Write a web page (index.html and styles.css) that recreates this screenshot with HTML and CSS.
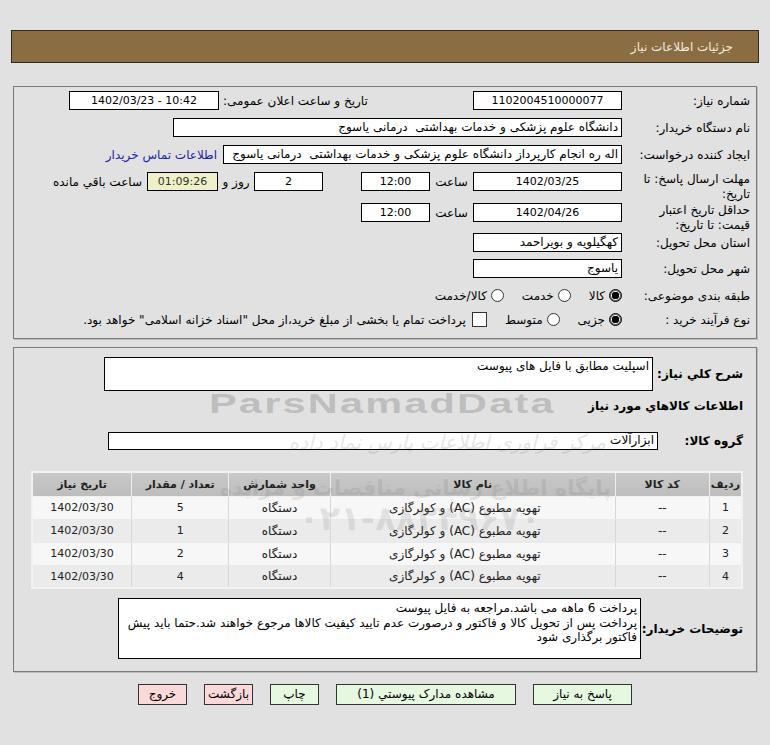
FILE: index.html
```html
<!DOCTYPE html>
<html lang="fa" dir="rtl">
<head>
<meta charset="utf-8">
<title>جزئیات اطلاعات نیاز</title>
<link rel="stylesheet" href="styles.css">
</head>
<body>
<div class="page">
  <div class="header">جزئیات اطلاعات نیاز</div>

  <div class="panel p1">
    <div class="row r1">
      <div class="lbl">شماره نیاز:</div>
      <div class="box w149 c">1102004510000077</div>
      <div class="lbl2 ann">تاریخ و ساعت اعلان عمومی:</div>
      <div class="box w150 c">1402/03/23 - 10:42</div>
    </div>
    <div class="row">
      <div class="lbl">نام دستگاه خریدار:</div>
      <div class="box w449">دانشگاه علوم پزشکی و خدمات بهداشتی&nbsp; درمانی یاسوج</div>
    </div>
    <div class="row">
      <div class="lbl">ایجاد کننده درخواست:</div>
      <div class="box w399">اله ره انجام کارپرداز دانشگاه علوم پزشکی و خدمات بهداشتی&nbsp; درمانی یاسوج</div>
      <a class="link">اطلاعات تماس خریدار</a>
    </div>
    <div class="row r4">
      <div class="lbl two">مهلت ارسال پاسخ: تا تاریخ:</div>
      <div class="box w149 c">1402/03/25</div>
      <div class="lbl2 saat">ساعت</div>
      <div class="box w69 c">12:00</div>
      <div class="box w69 c days">2</div>
      <div class="lbl2 ruz">روز و</div>
      <div class="box w71 c count">01:09:26</div>
      <div class="lbl2 rem">ساعت باقي مانده</div>
    </div>
    <div class="row r5">
      <div class="lbl two">حداقل تاریخ اعتبار قیمت: تا تاریخ:</div>
      <div class="box w149 c">1402/04/26</div>
      <div class="lbl2 saat">ساعت</div>
      <div class="box w69 c">12:00</div>
    </div>
    <div class="row r6">
      <div class="lbl">استان محل تحویل:</div>
      <div class="box w149">کهگیلویه و بویراحمد</div>
    </div>
    <div class="row">
      <div class="lbl">شهر محل تحویل:</div>
      <div class="box w149">یاسوج</div>
    </div>
    <div class="row opts">
      <div class="lbl">طبقه بندی موضوعی:</div>
      <span class="radio on"></span><span class="opt">کالا</span>
      <span class="radio"></span><span class="opt">خدمت</span>
      <span class="radio"></span><span class="opt">کالا/خدمت</span>
    </div>
    <div class="row opts">
      <div class="lbl">نوع فرآیند خرید :</div>
      <span class="radio on"></span><span class="opt">جزیی</span>
      <span class="radio"></span><span class="opt">متوسط</span>
      <span class="check"></span><span class="opt">پرداخت تمام یا بخشی از مبلغ خرید،از محل "اسناد خزانه اسلامی" خواهد بود.</span>
    </div>
  </div>

  <div class="panel p2">
    <div class="row2 desc">
      <div class="blbl">شرح کلي نياز:</div>
      <div class="box big">اسپلیت مطابق با فایل های پیوست</div>
    </div>
    <div class="sect">اطلاعات کالاهاي مورد نياز</div>
    <div class="row2 grp">
      <div class="blbl">گروه کالا:</div>
      <div class="box gbox">ابزارآلات</div>
    </div>
    <table class="items">
      <thead>
        <tr><th class="c1">ردیف</th><th class="c2">کد کالا</th><th class="c3">نام کالا</th><th class="c4">واحد شمارش</th><th class="c5">تعداد / مقدار</th><th class="c6">تاریخ نیاز</th></tr>
      </thead>
      <tbody>
        <tr><td>1</td><td>--</td><td>تهویه مطبوع (AC) و کولرگازی</td><td>دستگاه</td><td>5</td><td>1402/03/30</td></tr>
        <tr><td>2</td><td>--</td><td>تهویه مطبوع (AC) و کولرگازی</td><td>دستگاه</td><td>1</td><td>1402/03/30</td></tr>
        <tr><td>3</td><td>--</td><td>تهویه مطبوع (AC) و کولرگازی</td><td>دستگاه</td><td>2</td><td>1402/03/30</td></tr>
        <tr><td>4</td><td>--</td><td>تهویه مطبوع (AC) و کولرگازی</td><td>دستگاه</td><td>4</td><td>1402/03/30</td></tr>
      </tbody>
    </table>
    <div class="row2 notes">
      <div class="blbl">توضیحات خریدار:</div>
      <div class="box nbox">پرداخت 6 ماهه می باشد.مراجعه به فایل پیوست<br>پرداخت پس از تحویل کالا و فاکتور و درصورت عدم تایید کیفیت کالاها مرجوع خواهند شد.حتما باید پیش فاکتور برگذاری شود</div>
    </div>
    <div class="wm wm-en">ParsNamadData</div>
    <div class="wm wm-fa1">مرکز فراوری اطلاعات پارس نماد داده</div>
    <div class="wm wm-fa2">پایگاه اطلاع رسانی مناقصات و مزایده</div>
    <div class="wm wm-num">۰۲۱-۸۸۳۴۹۶۷۰</div>
  </div>

  <div class="buttons">
    <span class="btn g b1">پاسخ به نیاز</span>
    <span class="btn g b2">مشاهده مدارک پیوستي (1)</span>
    <span class="btn g b3">چاپ</span>
    <span class="btn r b4">بازگشت</span>
    <span class="btn r b5">خروج</span>
  </div>
</div>
</body>
</html>
```
FILE: styles.css
```css
* { box-sizing: border-box; }
body {
  margin: 0;
  background: #e1e1e1;
  font-family: "DejaVu Sans", Tahoma, sans-serif;
  font-size: 12px;
  color: #000;
}
.page { padding: 30px 11px 0 11px; position: relative; }
.header {
  height: 33px;
  background: #8b6d43;
  border: 1px solid #2e2a22;
  color: #f2ebdd;
  font-size: 12px;
  padding-right: 25px;
  line-height: 32px;
}
.panel {
  margin: 23px 2px 0 2px;
  border: 1px solid #7a7a7a;
  box-shadow: 1px 1px 0 #bdbdbd;
  position: relative;
}
.p1 { height: 253px; padding: 4px 6px 0 0; }
.row { display: flex; align-items: center; height: 19px; margin-bottom: 8px; }
.lbl { width: 128px; flex: none; white-space: nowrap; }
.lbl.two { white-space: normal; line-height: 15px; padding-left: 14px; }
.box {
  background: #fff;
  border: 1px solid #000;
  height: 19px;
  line-height: 17px;
  padding: 0 3px;
  white-space: nowrap;
  overflow: hidden;
  flex: none;
}
.c { text-align: center; direction: ltr; font-size: 11px; padding: 0; }
.w149 { width: 149px; }
.w150 { width: 150px; }
.w449 { width: 449px; }
.w399 { width: 399px; }
.w69 { width: 69px; }
.w71 { width: 71px; }
.ann { width: 159px; padding-right: 95px; box-sizing: content-box; white-space: nowrap; text-align: left; padding-left: 4px; width: 155px; }
.link { color: #1a23a8; margin-right: 6px; white-space: nowrap; }
.r4 .lbl, .r5 .lbl { align-self: flex-start; }
.r4 { margin-bottom: 12px; }
.saat { width: 43px; text-align: center; flex: none; }
.days { margin-right: 38px; }
.ruz { width: 36px; text-align: center; flex: none; white-space: nowrap; }
.count { background: #efefc8; color: #333; }
.rem { margin-right: 5px; white-space: nowrap; }
.r5 { margin-bottom: 11px; }
.r6 { margin-bottom: 7px; }
.opts { margin-bottom: 5px; }
.radio {
  width: 13px; height: 13px; border-radius: 50%;
  border: 1px solid #333; background: #fff; flex: none;
  margin-left: 4px;
}
.radio.on { background: radial-gradient(circle, #000 0 3.5px, #fff 4px); border-color: #000; box-shadow: inset 0 0 0 1px #555; }
.opt { margin-left: 18px; white-space: nowrap; }
.check { width: 15px; height: 15px; border: 1px solid #333; background: #fff; flex: none; margin-left: 6px; }

.p2 { margin-top: 8px; height: 325px; padding: 9px 13px 0 14px; }
.row2 { display: flex; }
.blbl { font-weight: bold; font-size: 12px; white-space: nowrap; flex: none; }
.desc .blbl { width: 90px; padding-top: 10px; }
.big { width: 549px; height: 34px; line-height: 15px; padding-top: 1px; }
.sect { font-weight: bold; font-size: 12px; margin-top: 8px; height: 20px; }
.grp { margin-top: 13px; align-items: center; }
.grp .blbl { width: 85px; }
.gbox { width: 550px; height: 18px; line-height: 15px; }
.items {
  margin-top: 21px;
  width: 712px;
  border-collapse: collapse;
  border: 2px solid #f2f2f2;
  font-size: 12px;
}
.items th {
  background: linear-gradient(#c9c9c9, #bdbdbd);
  height: 24px;
  font-weight: bold;
  font-size: 11px;
  color: #222;
  border: 1px solid #efefef;
}
.items td {
  height: 23px;
  text-align: center;
  border: 1px solid #e9e9e9;
  border-left-color: #d7d7d7;
  color: #222;
}
.items td:nth-child(1), .items td:nth-child(5), .items td:nth-child(6) { font-size: 11px; }
.items td:nth-child(3) { text-align: right; padding-right: 74px; }
.items tbody tr:nth-child(odd) td { background: #f7f7f7; }
.items tbody tr:nth-child(even) td { background: #ebebeb; }
.c1 { width: 30px; }
.c2 { width: 95px; }
.c3 { width: 287px; }
.c4 { width: 102px; }
.c5 { width: 98px; }
.c6 { width: 100px; }
.notes { margin-top: 9px; align-items: center; }
.notes .blbl { width: 102px; }
.nbox { width: 523px; height: 61px; white-space: normal; line-height: 14.5px; padding: 2px 3px; }

.buttons { display: flex; margin-top: 12px; padding-right: 127px; }
.btn {
  height: 21px; line-height: 19px;
  border: 1px solid #333;
  text-align: center;
  font-size: 12px;
  margin-left: 17px;
  flex: none;
}
.g { background: #e7f8e1; }
.r { background: #fbd9d9; }
.b1 { width: 99px; }
.b2 { width: 180px; }
.b3 { width: 49px; }
.b4 { width: 49px; }
.b5 { width: 49px; }

.wm { position: absolute; pointer-events: none; white-space: nowrap; }
.wm-en {
  left: 195px; top: 40px;
  font-family: "Liberation Sans", Arial, sans-serif;
  font-weight: bold;
  font-size: 28px;
  letter-spacing: 1.5px;
  color: rgba(140,140,140,0.42);
  direction: ltr;
  transform: scaleX(1.48);
  transform-origin: left top;
}
.wm-fa1 {
  right: 150px; top: 82px;
  font-size: 20px;
  font-style: italic;
  color: rgba(120,120,120,0.2);
}
.wm-fa2 {
  right: 145px; top: 128px;
  font-size: 21px;
  font-weight: bold;
  color: rgba(110,110,110,0.18);
}
.wm-num {
  right: 215px; top: 150px;
  font-size: 34px;
  font-weight: bold;
  color: rgba(110,110,110,0.16);
  direction: ltr;
}
```
